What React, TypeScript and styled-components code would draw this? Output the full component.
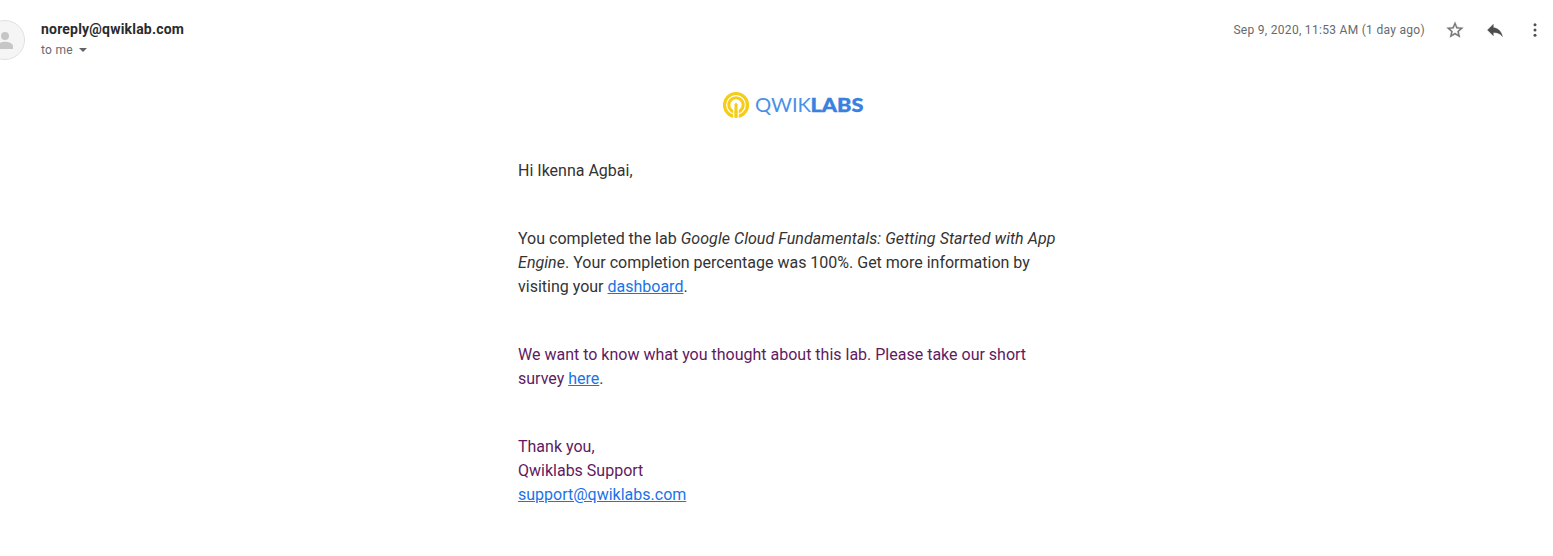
import React from "react";
import styled, { createGlobalStyle } from "styled-components";

const GlobalStyle = createGlobalStyle`
  * { box-sizing: border-box; }
  body { margin: 0; background: #fff; overflow: hidden; }
`;

const Message = styled.main`
  width: 100%;
  height: 556px;
  overflow: hidden;
  font-family: Roboto, "Liberation Sans", sans-serif;
`;

const Header = styled.header`
  display: flex;
  align-items: flex-start;
  height: 80px;
  padding: 20px 8px 0 0;
`;

const Avatar = styled.div`
  flex: none;
  width: 40px;
  height: 40px;
  margin-left: -15px;
  svg { display: block; }
`;

const Sender = styled.div`
  flex: 1;
  padding-left: 16px;
`;

const Address = styled.div`
  height: 20px;
  font-size: 14px;
  font-weight: 700;
  line-height: 18px;
  color: #2a2b2e;
  letter-spacing: 0.2px;
`;

const Recipient = styled.div`
  display: flex;
  align-items: center;
  gap: 6px;
  font-size: 12px;
  line-height: 20px;
  letter-spacing: 0.3px;
  color: #666a6e;
`;

const Meta = styled.div`
  display: flex;
  align-items: center;
  height: 20px;
`;

const Timestamp = styled.span`
  font-size: 12px;
  line-height: 20px;
  letter-spacing: 0.3px;
  color: #666a6e;
  margin-right: 20px;
`;

const Actions = styled.div`
  display: flex;
  gap: 20px;
  svg { display: block; }
`;

const Content = styled.section`
  width: 550px;
  margin-left: 518px;
`;

const LogoRow = styled.div`
  display: flex;
  justify-content: center;
  height: 79px;
  padding: 8px 0 0 2px;
  svg { display: block; }
`;

const Paragraph = styled.p<{ $quoted?: boolean }>`
  margin: 0 0 44px;
  font-size: 16px;
  line-height: 24px;
  color: ${(p) => (p.$quoted ? "#611a61" : "#333")};
`;

const LabTitle = styled.em`
  letter-spacing: 0.055px;
`;

const Link = styled.a`
  color: #1a73e8;
  text-decoration: underline;
`;

const QwiklabsLogo = () => (
  <svg width="142" height="34" viewBox="0 0 142 34">
    <circle cx="13" cy="17" r="11.500" fill="none" stroke="#f5cc16" strokeWidth="3.200" />
    <circle cx="13" cy="17" r="7.200" fill="#fff" stroke="#f5cc16" strokeWidth="3" />
    <path d="M10.900 19V31M15.100 19V31" fill="none" stroke="#fff" strokeWidth="1.300" />
    <path d="M11.500 29V16.500a1.500 1.500 0 0 1 3 0V29z" fill="#f5cc16" />
    <text x="32" y="23.500" fontFamily="Lato, sans-serif" fontSize="19.500" fill="#4a90e8" textLength="56" lengthAdjust="spacingAndGlyphs">QWIK</text>
    <text x="87.500" y="23.500" fontFamily="Lato, sans-serif" fontSize="19.500" fontWeight="900" fill="#3980e0" stroke="#3980e0" strokeWidth="0.400" textLength="53" lengthAdjust="spacingAndGlyphs">LABS</text>
  </svg>
);

export default function App() {
  return (
    <>
      <GlobalStyle />
      <Message>
        <Header>
          <Avatar>
            <svg width="40" height="40" viewBox="0 0 40 40">
              <circle cx="20" cy="20" r="19.500" fill="#f5f5f5" stroke="#e0e0e0" />
              <circle cx="20" cy="16" r="4" fill="#c6c6c6" />
              <path d="M12 29v-3c0-2.700 5.300-4.200 8-4.200s8 1.500 8 4.200v3z" fill="#c6c6c6" />
            </svg>
          </Avatar>
          <Sender>
            <Address>noreply@qwiklab.com</Address>
            <Recipient>
              to me
              <svg width="8" height="4" viewBox="0 0 8 4"><path d="M0 0h8L4 4z" fill="#5f6368" /></svg>
            </Recipient>
          </Sender>
          <Meta>
            <Timestamp>Sep 9, 2020, 11:53 AM (1 day ago)</Timestamp>
            <Actions>
              <svg width="20" height="20" viewBox="0 0 24 24" fill="#757575" stroke="#757575" strokeWidth="0.300">
                <path d="M22 9.240l-7.190-.62L12 2 9.190 8.630 2 9.240l5.460 4.730L5.820 21 12 17.270 18.180 21l-1.630-7.030L22 9.240zM12 15.400l-3.760 2.270 1-4.280-3.320-2.880 4.380-.38L12 6.100l1.710 4.040 4.380.38-3.320 2.880 1 4.280L12 15.400z" />
              </svg>
              <svg width="20" height="20" viewBox="0 0 24 24" fill="#4d4d4d" stroke="#4d4d4d" strokeWidth="0.400">
                <path d="M10 9V5l-7 7 7 7v-4.100c5 0 8.500 1.600 11 5.100-1-5-4-10-11-11z" />
              </svg>
              <svg width="20" height="20" viewBox="0 0 20 20" fill="#505050">
                <circle cx="10" cy="4.700" r="1.500" /><circle cx="10" cy="10" r="1.500" /><circle cx="10" cy="15.300" r="1.500" />
              </svg>
            </Actions>
          </Meta>
        </Header>
        <Content>
          <LogoRow><QwiklabsLogo /></LogoRow>
          <Paragraph>Hi Ikenna Agbai,</Paragraph>
          <Paragraph>
            You completed the lab <LabTitle>Google Cloud Fundamentals: Getting Started with App Engine</LabTitle>. Your completion
            percentage was 100%. Get more information by visiting your <Link>dashboard</Link>.
          </Paragraph>
          <Paragraph $quoted>
            We want to know what you thought about this lab. Please take our short survey <Link>here</Link>.
          </Paragraph>
          <Paragraph $quoted>
            Thank you,<br />
            Qwiklabs Support<br />
            <Link>support@qwiklabs.com</Link>
          </Paragraph>
        </Content>
      </Message>
    </>
  );
}
